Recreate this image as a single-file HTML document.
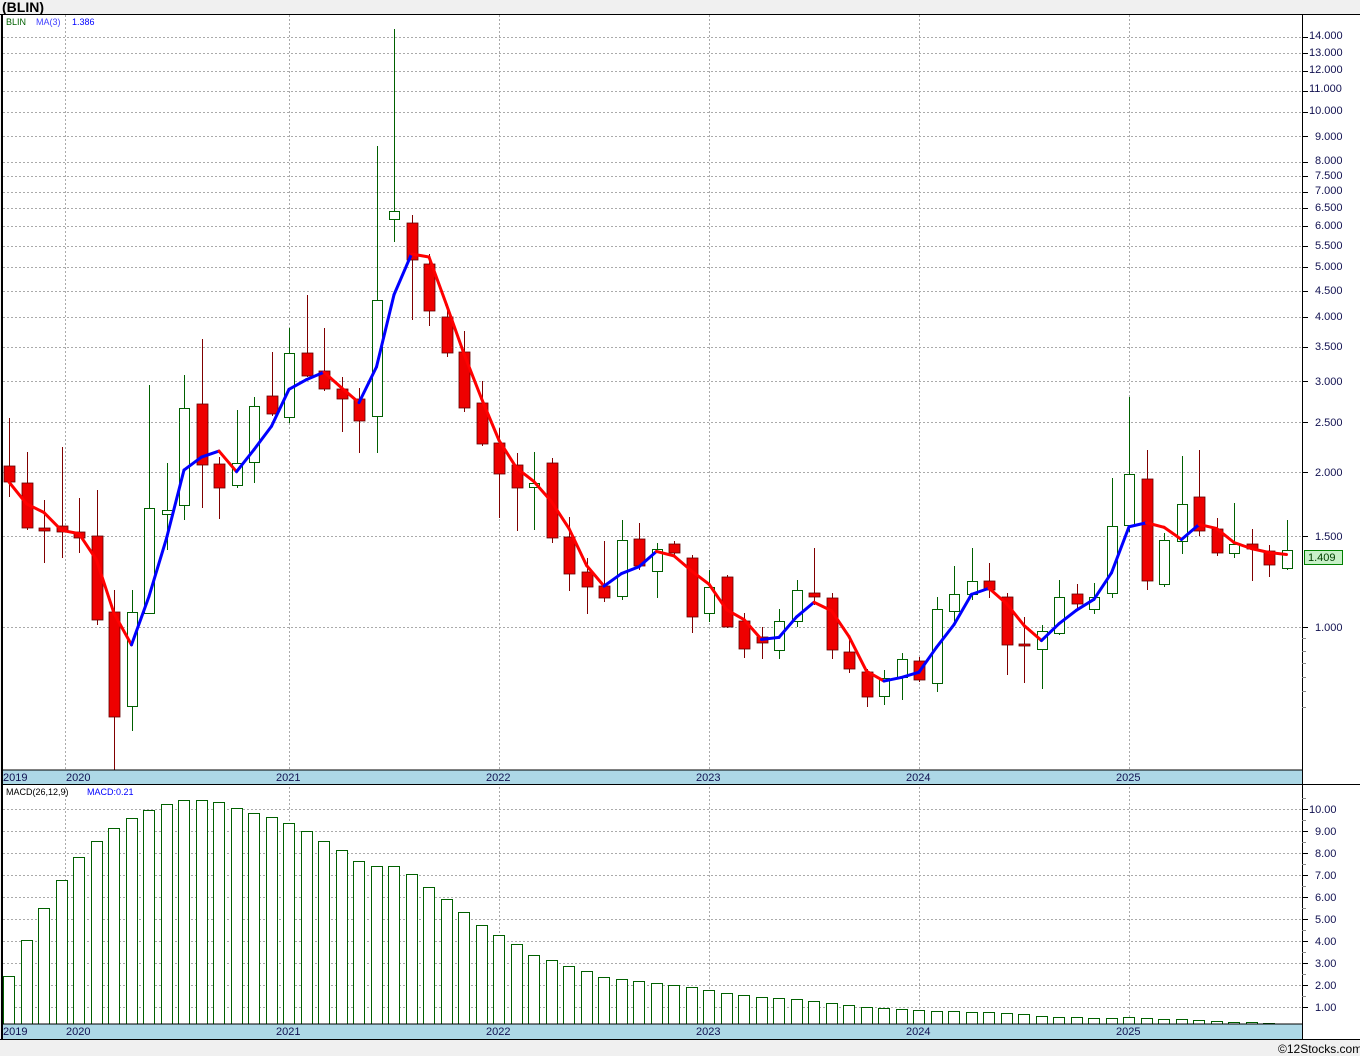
<!DOCTYPE html>
<html><head><meta charset="utf-8"><style>
html,body{margin:0;padding:0;width:1360px;height:1056px;overflow:hidden;background:#f0f0f0;font-family:"Liberation Sans",sans-serif}
#s{position:absolute;left:0;top:0}
</style></head><body>
<svg id="s" width="1360" height="1056" xmlns="http://www.w3.org/2000/svg" font-family="Liberation Sans, sans-serif" font-size="11">
<rect x="0" y="0" width="1360" height="1056" fill="#f0f0f0"/>
<rect x="2" y="14" width="1358" height="1025" fill="#fff"/>
<g id="grid"></g>
<g id="candles"></g>
<g id="ma"></g>
<g id="macd"></g>
<rect x="2" y="770" width="1300" height="14" fill="#add8e6"/>
<rect x="2" y="1024" width="1300" height="15" fill="#add8e6"/>
<line x1="2" y1="770" x2="1302" y2="770" stroke="#000"/>
<line x1="2" y1="784.5" x2="1360" y2="784.5" stroke="#000"/>
<line x1="2" y1="1024" x2="1302" y2="1024" stroke="#000"/>
<line x1="1302.5" y1="14" x2="1302.5" y2="1039" stroke="#000"/>
<line x1="0" y1="14.5" x2="1360" y2="14.5" stroke="#000"/>
<line x1="2" y1="14" x2="2" y2="1039" stroke="#000" stroke-width="2"/>
<line x1="0" y1="1039.5" x2="1360" y2="1039.5" stroke="#000"/>
<g id="ticks"></g>
<text x="2" y="12" font-weight="bold" font-size="14">(BLIN)</text>
<text x="6" y="25" font-size="9" fill="#006000">BLIN</text>
<text x="36" y="25" font-size="9" fill="#4040ff">MA(3)</text>
<text x="72" y="25" font-size="9" fill="#0000ff">1.386</text>
<text x="6" y="795" font-size="9" fill="#000">MACD(26,12,9)</text>
<text x="87" y="795" font-size="9" fill="#0000ff">MACD:0.21</text>
<g font-size="11" fill="#101050">
<text x="3" y="781">2019</text><text x="66" y="781">2020</text><text x="276" y="781">2021</text><text x="486" y="781">2022</text><text x="696" y="781">2023</text><text x="906" y="781">2024</text><text x="1116" y="781">2025</text>
<text x="3" y="1035">2019</text><text x="66" y="1035">2020</text><text x="276" y="1035">2021</text><text x="486" y="1035">2022</text><text x="696" y="1035">2023</text><text x="906" y="1035">2024</text><text x="1116" y="1035">2025</text>
</g>
<g id="plabels" font-size="11" fill="#101050">
<text x="1309" y="39">14.000</text><text x="1309" y="73">12.000</text><text x="1309" y="56">13.000</text><text x="1309" y="92">11.000</text><text x="1309" y="114">10.000</text><text x="1315" y="140">9.000</text><text x="1315" y="164">8.000</text><text x="1315" y="179">7.500</text><text x="1315" y="194">7.000</text><text x="1315" y="211">6.500</text><text x="1315" y="229">6.000</text><text x="1315" y="249">5.500</text><text x="1315" y="270">5.000</text><text x="1315" y="294">4.500</text><text x="1315" y="320">4.000</text><text x="1315" y="350">3.500</text><text x="1315" y="385">3.000</text><text x="1315" y="426">2.500</text><text x="1315" y="476">2.000</text><text x="1315" y="540">1.500</text><text x="1315" y="631">1.000</text>
<text x="1309" y="813">10.00</text><text x="1315" y="835">9.00</text><text x="1315" y="857">8.00</text><text x="1315" y="879">7.00</text><text x="1315" y="901">6.00</text><text x="1315" y="923">5.00</text><text x="1315" y="945">4.00</text><text x="1315" y="967">3.00</text><text x="1315" y="989">2.00</text><text x="1315" y="1011">1.00</text>
</g>
<rect x="1304.5" y="550.5" width="38" height="14" fill="#c8f0c8" stroke="#008000"/>
<text x="1308" y="561" font-size="11" fill="#004000">1.409</text>
<text x="1278" y="1053" font-size="12" fill="#000">©12Stocks.com</text>
</svg>
<script>
var NS="http://www.w3.org/2000/svg";
function el(p,t,a){var e=document.createElementNS(NS,t);for(var k in a)e.setAttribute(k,a[k]);p.appendChild(e);return e;}
var g=document.getElementById('grid'),tk=document.getElementById('ticks');
var pl=[14,13,12,11,10,9,8,7.5,7,6.5,6,5.5,5,4.5,4,3.5,3,2.5,2,1.5,1];
function py(p){return 627-515*Math.log10(p);}
pl.forEach(function(p){var y=Math.round(py(p))+0.5;el(g,'line',{x1:3,y1:y,x2:1302,y2:y,stroke:'#aaa','stroke-dasharray':'2,2'});el(tk,'line',{x1:1302,y1:y,x2:1308,y2:y,stroke:'#000'});});
[0.95,0.9,0.85,0.8,0.75,0.7].forEach(function(p){var y=Math.round(py(p))+0.5;el(tk,'line',{x1:1302,y1:y,x2:1306,y2:y,stroke:'#888'});});
for(var v=1;v<=10;v++){var y=1029-22*v+0.5;el(g,'line',{x1:3,y1:y,x2:1302,y2:y,stroke:'#aaa','stroke-dasharray':'2,2'});el(tk,'line',{x1:1302,y1:y,x2:1308,y2:y,stroke:'#000'});el(tk,'line',{x1:1302,y1:y-11,x2:1306,y2:y-11,stroke:'#888'});}
[65,289,499,709,919,1129].forEach(function(x){el(g,'line',{x1:x+.5,y1:15,x2:x+.5,y2:1024,stroke:'#aaa','stroke-dasharray':'2,2'});});
var C=[[1,466,482,418,497],[1,483,528,452,530],[1,528,531,500,563],[1,526,532,447,558],[1,532,538,498,553],[1,536,620,490,625],[1,612,717,590,770],[0,612,707,590,731],[0,508,614,385,614],[0,510,515,463,550],[0,408,506,375,520],[1,404,465,339,508],[1,464,488,457,519],[0,463,486,410,488],[0,406,463,397,483],[1,396,414,352,416],[0,353,418,328,423],[1,353,376,295,377],[1,371,389,328,391],[1,389,399,377,432],[1,399,421,388,453],[0,300,417,146,453],[0,211,220,29,242],[1,223,260,215,320],[1,264,311,254,326],[1,317,353,305,357],[1,352,408,331,412],[1,403,444,381,446],[1,443,474,428,518],[1,465,488,453,531],[0,483,488,452,530],[1,463,538,458,543],[1,537,574,517,591],[1,572,587,558,614],[1,586,598,541,602],[0,540,597,520,600],[1,539,566,523,570],[0,549,572,543,598],[1,544,553,541,555],[1,558,617,555,633],[0,587,614,570,622],[1,577,627,575,628],[1,621,649,613,658],[1,637,643,627,659],[0,621,651,609,659],[0,590,622,580,627],[1,593,597,548,605],[1,598,650,593,659],[1,652,669,640,673],[1,672,697,669,707],[0,678,697,670,705],[0,659,678,653,700],[1,661,680,657,682],[0,609,684,597,692],[0,594,612,566,622],[0,581,595,548,600],[1,581,590,563,598],[1,597,645,593,675],[1,644,646,617,683],[0,631,650,625,689],[0,597,634,580,635],[1,594,604,584,608],[0,597,610,583,614],[0,526,594,478,598],[0,474,526,397,532],[1,479,581,450,590],[0,540,585,533,587],[0,504,542,456,554],[1,497,531,450,536],[1,529,553,518,556],[0,544,554,503,558],[1,544,549,529,581],[1,551,565,545,577],[0,550,569,520,570]];
var cg=document.getElementById('candles'),closes=[];
C.forEach(function(c,i){var x=Math.round(9+17.5*i);
 el(cg,'line',{x1:x+.5,y1:c[3],x2:x+.5,y2:c[4],stroke:c[0]?'#800000':'#006000'});
 if(c[0]){el(cg,'rect',{x:x-5,y:c[1],width:11,height:Math.max(2,c[2]-c[1]),fill:'#ee0000',stroke:'#600000','stroke-width':0.8});closes.push(c[2]);}
 else{el(cg,'rect',{x:x-4.5,y:c[1]+.5,width:10,height:Math.max(2,c[2]-c[1]-1),fill:'#fff',stroke:'#006000'});closes.push(c[1]);}
});
var pr=closes.map(function(y){return Math.pow(10,(627-y)/515);});
var mg=document.getElementById('ma'),prev=null,pv=null;
pr.forEach(function(p,i){var a=pr.slice(Math.max(0,i-2),i+1);var m=a.reduce(function(s,v){return s+v;},0)/a.length;var y=py(m),x=9+17.5*i;
 if(prev){el(mg,'line',{x1:prev[0],y1:prev[1],x2:x,y2:y,stroke:m<pv?'#ff0000':'#0000ff','stroke-width':3,'stroke-linecap':'round'});}
 prev=[x,y];pv=m;});
var M=[976,940,908,880,857,841,828,818,810,804,800,800,802,808,813,817,823,831,841,850,861,866,866,874,887,899,912,925,935,944,955,960,966,971,977,979,981,983,985,987,990,993,995,997,998,999,1001,1003,1005,1007,1008,1009,1010,1011,1011,1012,1012,1013,1014,1016,1017,1017,1018,1018,1017,1018,1019,1019,1020,1021,1022,1022,1023];
var mdg=document.getElementById('macd');
M.forEach(function(t,i){var x=Math.round(9+17.5*i);el(mdg,'rect',{x:x-5.5,y:t+.5,width:11,height:1024-t-.5,fill:'#fff',stroke:'#006000'});});
</script>
</body></html>
